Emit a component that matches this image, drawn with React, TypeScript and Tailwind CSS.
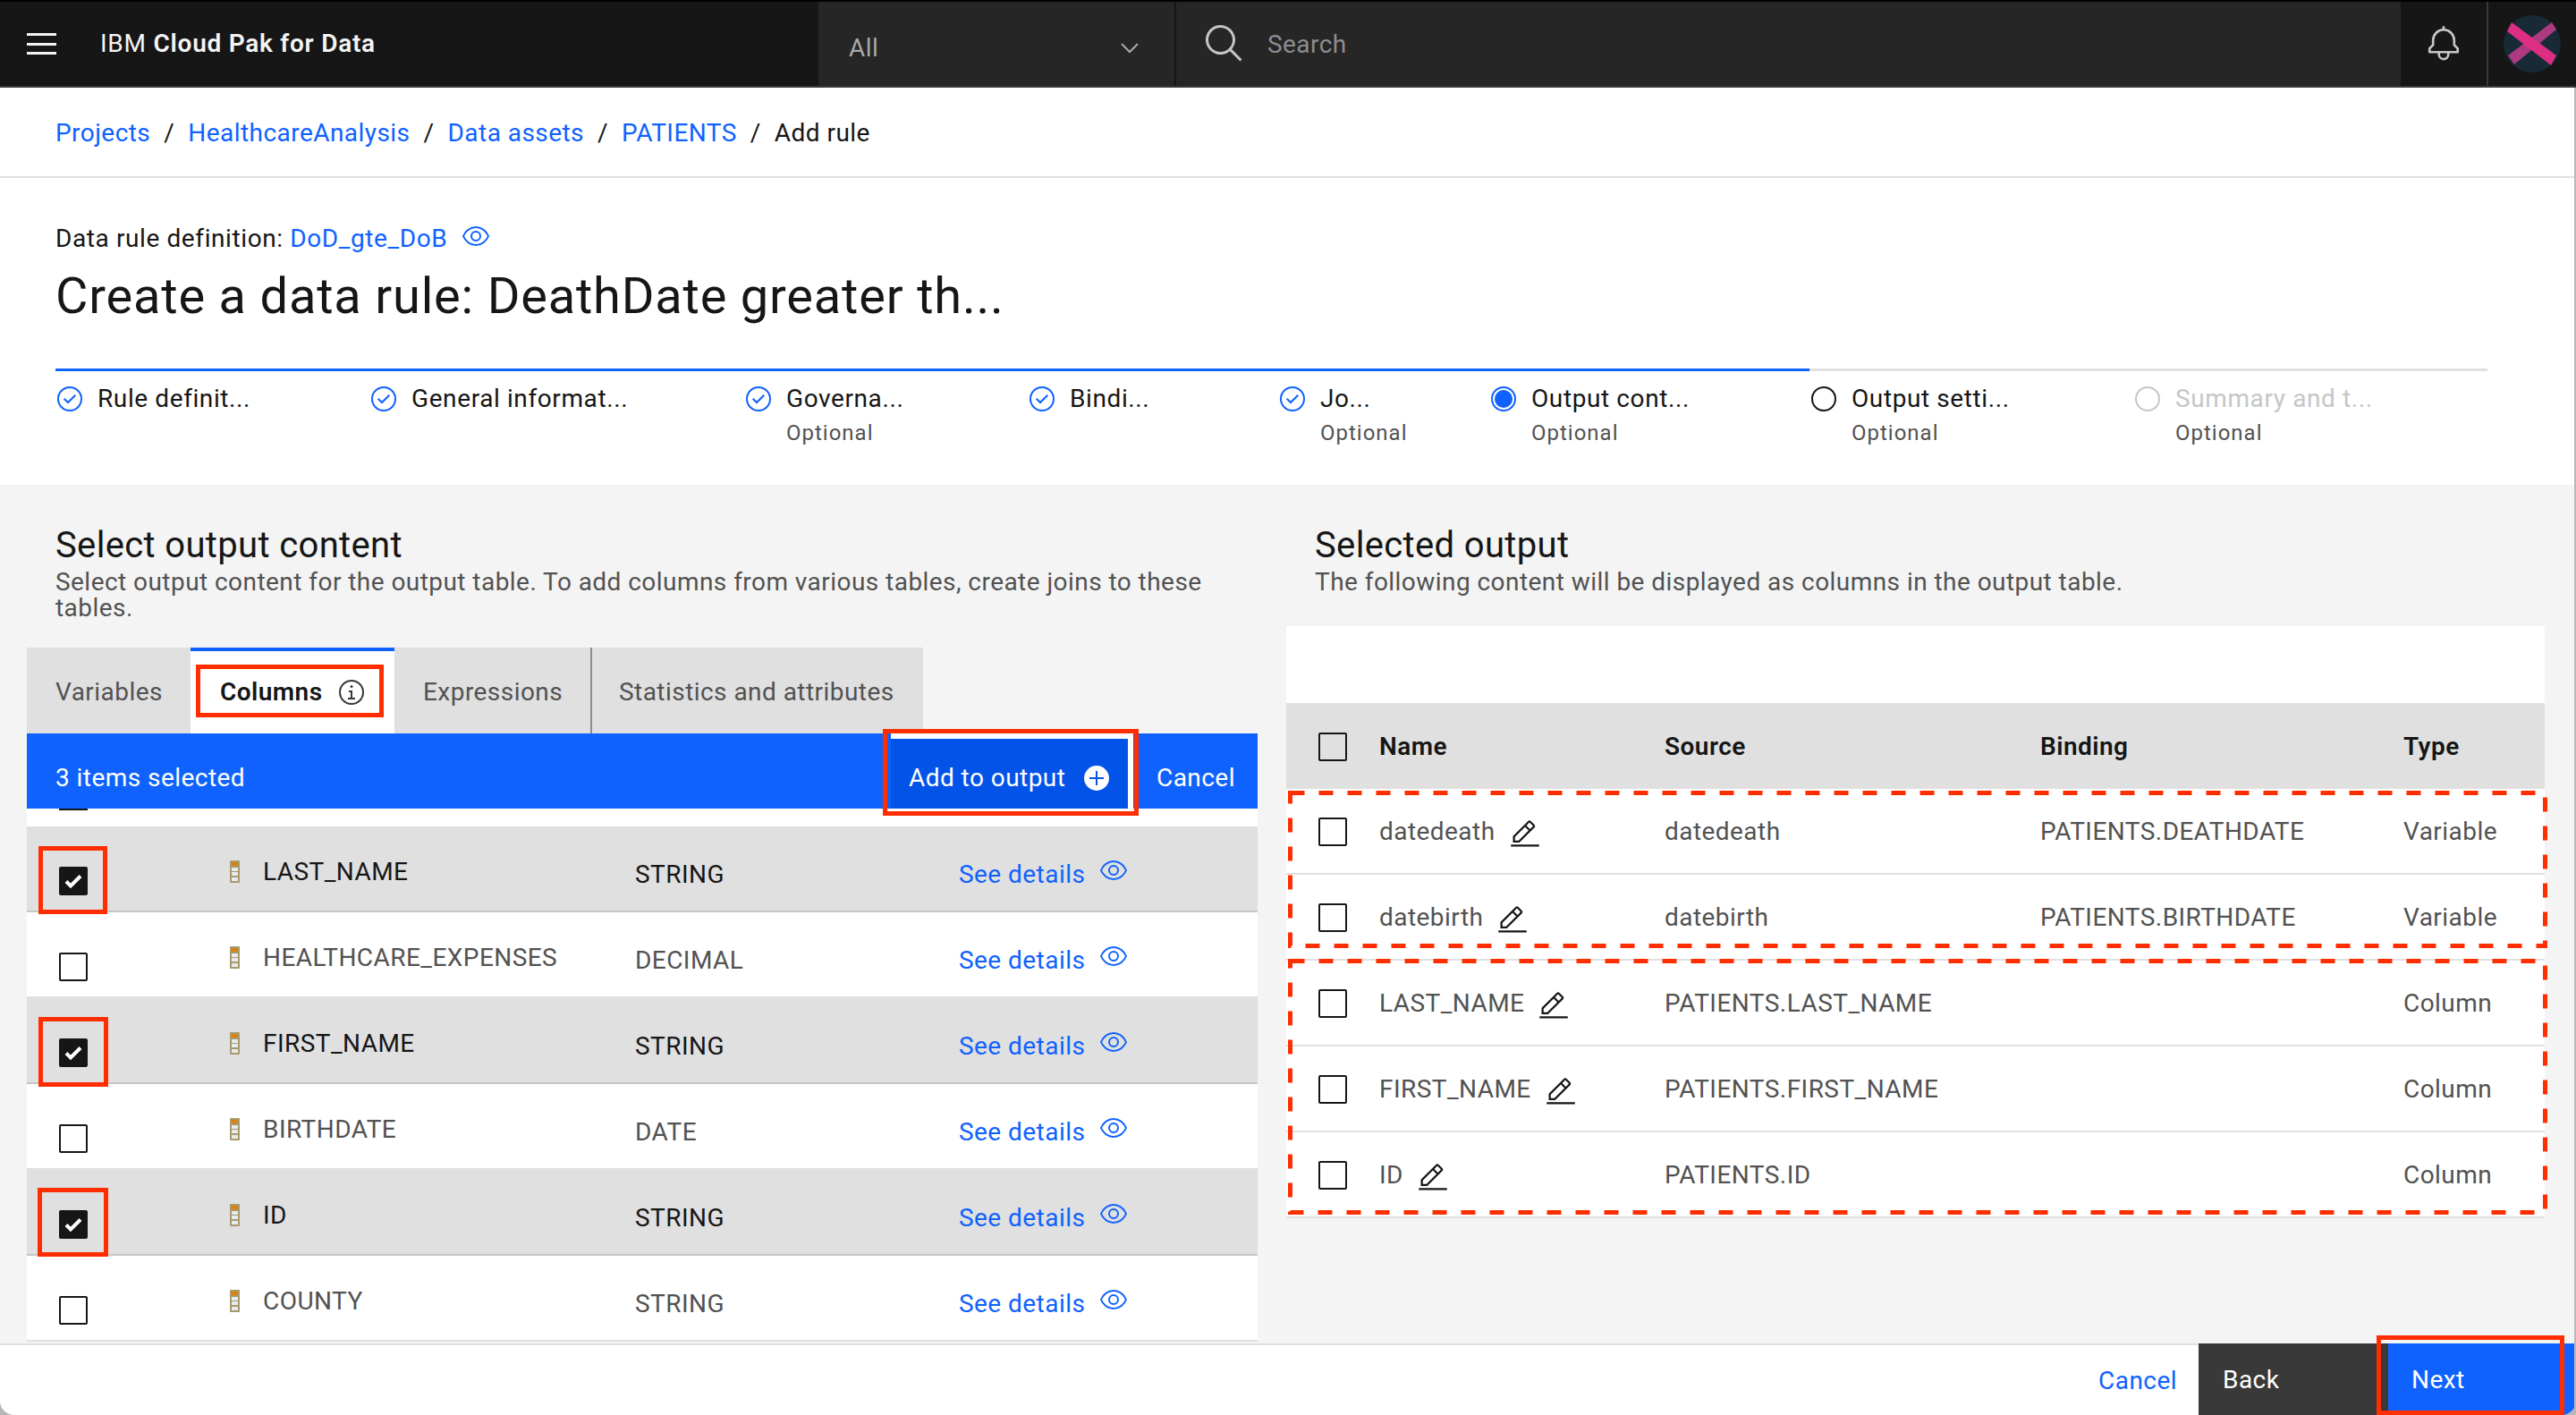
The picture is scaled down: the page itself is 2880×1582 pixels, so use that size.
import type React from "react"

const steps = [
  { label: "Rule definit...", state: "done", width: "w-[351px]" },
  { label: "General informat...", state: "done", width: "w-[419px]" },
  { label: "Governa...", state: "done", optional: true, width: "w-[317px]" },
  { label: "Bindi...", state: "done", width: "w-[280px]" },
  { label: "Jo...", state: "done", optional: true, width: "w-[236px]" },
  { label: "Output cont...", state: "current", optional: true, width: "w-[358px]" },
  { label: "Output setti...", state: "todo", optional: true, width: "w-[362px]" },
  { label: "Summary and t...", state: "disabled", optional: true, width: "w-[396px]" },
]

const leftRows = [
  { name: "LAST_NAME", type: "STRING", selected: true },
  { name: "HEALTHCARE_EXPENSES", type: "DECIMAL", selected: false },
  { name: "FIRST_NAME", type: "STRING", selected: true },
  { name: "BIRTHDATE", type: "DATE", selected: false },
  { name: "ID", type: "STRING", selected: true },
  { name: "COUNTY", type: "STRING", selected: false },
]

const rightRows = [
  { name: "datedeath", source: "datedeath", binding: "PATIENTS.DEATHDATE", type: "Variable" },
  { name: "datebirth", source: "datebirth", binding: "PATIENTS.BIRTHDATE", type: "Variable" },
  { name: "LAST_NAME", source: "PATIENTS.LAST_NAME", binding: "", type: "Column" },
  { name: "FIRST_NAME", source: "PATIENTS.FIRST_NAME", binding: "", type: "Column" },
  { name: "ID", source: "PATIENTS.ID", binding: "", type: "Column" },
]

function EyeIcon({ className }: { className?: string }): React.ReactElement {
  return (
    <svg viewBox="0 0 32 32" fill="currentColor" className={className}>
      <path d="M30.94 15.66A16.69 16.69 0 0 0 16 5 16.69 16.69 0 0 0 1.06 15.66a1 1 0 0 0 0 .68A16.69 16.69 0 0 0 16 27a16.69 16.69 0 0 0 14.94-10.66 1 1 0 0 0 0-.68zM16 25c-5.3 0-10.9-3.93-12.93-9C5.1 10.93 10.7 7 16 7s10.9 3.93 12.93 9C26.9 21.07 21.3 25 16 25z" />
      <path d="M16 10a6 6 0 1 0 6 6 6 6 0 0 0-6-6zm0 10a4 4 0 1 1 4-4 4 4 0 0 1-4 4z" />
    </svg>
  )
}

function PencilIcon(): React.ReactElement {
  return (
    <svg viewBox="0 0 32 32" fill="#161616" className="mt-[6px] h-9 w-9 shrink-0">
      <path d="M2 26h28v2H2zM25.4 9c.8-.8.8-2 0-2.8l-3.6-3.6c-.8-.8-2-.8-2.8 0l-15 15V24h6.4l15-15zm-5-5L24 7.6l-3 3L17.4 7l3-3zM6 22v-3.6l10-10 3.6 3.6-10 10H6z" />
    </svg>
  )
}

function StepIcon({ state }: { state: string }): React.ReactElement {
  if (state === "done") {
    return (
      <svg viewBox="0 0 32 32" fill="#0f62fe" className="h-8 w-8 shrink-0">
        <path d="M14 21.414 9 16.413 10.413 15 14 18.586 21.585 11 23 12.415 14 21.414z" />
        <path d="M16 2a14 14 0 1 0 14 14A14 14 0 0 0 16 2zm0 26a12 12 0 1 1 12-12 12 12 0 0 1-12 12z" />
      </svg>
    )
  }
  if (state === "current") {
    return (
      <svg viewBox="0 0 32 32" fill="#0f62fe" className="h-8 w-8 shrink-0">
        <path d="M16 2a14 14 0 1 0 14 14A14 14 0 0 0 16 2zm0 26a12 12 0 1 1 12-12 12 12 0 0 1-12 12z" />
        <circle cx="16" cy="16" r="10" />
      </svg>
    )
  }
  return (
    <svg viewBox="0 0 32 32" fill={state === "todo" ? "#161616" : "#c6c6c6"} className="h-8 w-8 shrink-0">
      <path d="M16 2a14 14 0 1 0 14 14A14 14 0 0 0 16 2zm0 26a12 12 0 1 1 12-12 12 12 0 0 1-12 12z" />
    </svg>
  )
}

function Checkbox({ checked = false }: { checked?: boolean }): React.ReactElement {
  if (checked) {
    return (
      <span className="flex h-8 w-8 items-center justify-center rounded-[2px] bg-[#161616]">
        <svg viewBox="0 0 32 32" className="h-8 w-8">
          <path d="M8 16.5l5 5 11-11" fill="none" stroke="#fff" strokeWidth="4" />
        </svg>
      </span>
    )
  }
  return <span className="block h-8 w-8 rounded-[2px] border-2 border-[#161616]" />
}

function ColumnIcon(): React.ReactElement {
  return (
    <svg viewBox="0 0 11 25" className="h-[25px] w-[11px]">
      <rect width="11" height="25" rx="1" fill="#a89a6c" />
      <rect x="2" y="2" width="7" height="4" fill="#d9820f" />
      <rect x="2" y="8" width="7" height="4" fill="#e6ebf0" />
      <rect x="2" y="13" width="7" height="4" fill="#e6ebf0" />
      <rect x="2" y="19" width="7" height="4" fill="#e6ebf0" />
    </svg>
  )
}

function Header(): React.ReactElement {
  return (
    <header className="flex h-[98px] shrink-0 border-t-2 border-b-2 border-t-black border-b-[#393939] bg-[#161616] text-[#f4f4f4]">
      <div className="flex w-[915px] items-center">
        <div className="ml-[30px] flex h-6 w-[33px] flex-col justify-between">
          <span className="h-[3px] bg-[#f4f4f4]" />
          <span className="h-[3px] bg-[#f4f4f4]" />
          <span className="h-[3px] bg-[#f4f4f4]" />
        </div>
        <span className="ml-[49px] text-[28px] tracking-[0.75px]">
          IBM <span className="font-semibold">Cloud Pak for Data</span>
        </span>
      </div>
      <div className="flex w-[400px] items-center justify-between border-r-2 border-[#161616] bg-[#262626] pl-[34px] pr-[40px] pt-[10px] text-[28px] text-[#a8a8a8]">
        <span>All</span>
        <svg viewBox="0 0 20 12" className="h-3 w-5" fill="none" stroke="#a8a8a8" strokeWidth="2">
          <path d="M1 1l9 9 9-9" />
        </svg>
      </div>
      <div className="flex w-[1369px] items-center gap-[24px] bg-[#262626] pl-[30px] text-[28px] text-[#8d8d8d]">
        <svg viewBox="0 0 32 32" fill="#c6c6c6" className="h-12 w-12 shrink-0">
          <path d="M29 27.586l-7.552-7.552a11.018 11.018 0 1 0-1.414 1.414L27.586 29zM4 13a9 9 0 1 1 9 9 9.01 9.01 0 0 1-9-9z" />
        </svg>
        <span className="mt-[2px]">Search</span>
      </div>
      <div className="flex w-[98px] items-center justify-center border-r-2 border-[#393939]">
        <svg viewBox="0 0 32 32" fill="#c6c6c6" className="h-[42px] w-[42px]">
          <path d="M28.707 19.293 26 16.586V13a10.014 10.014 0 0 0-9-9.95V1h-2v2.05A10.014 10.014 0 0 0 6 13v3.586l-2.707 2.707A1 1 0 0 0 3 20v3a1 1 0 0 0 1 1h7v.777a5.152 5.152 0 0 0 4.5 5.199A5.006 5.006 0 0 0 21 25v-1h7a1 1 0 0 0 1-1v-3a1 1 0 0 0-.293-.707zM19 25a3 3 0 0 1-6 0v-1h6zm8-3H5v-1.586l2.707-2.707A1 1 0 0 0 8 17v-4a8 8 0 0 1 16 0v4a1 1 0 0 0 .293.707L27 20.414z" />
        </svg>
      </div>
      <div className="flex flex-1 items-center justify-center">
        <svg viewBox="0 0 64 64" className="h-16 w-16">
          <circle cx="32" cy="32" r="32" fill="#172a36" />
          <path d="M54 8 L59 16 L12 55 L5 45 Z" fill="#ad3a80" />
          <path d="M9 8 L59 45 L53 56 L4 18 Z" fill="#dd2e83" />
        </svg>
      </div>
    </header>
  )
}

function Breadcrumb(): React.ReactElement {
  const links = ["Projects", "HealthcareAnalysis", "Data assets", "PATIENTS"]
  return (
    <nav className="flex h-[101px] shrink-0 items-center border-b-2 border-[#e0e0e0] pl-[62px] pt-[2px] text-[28px] text-[#161616]">
      {links.map((link) => (
        <span key={link} className="flex items-center">
          <span className="text-[#0f62fe]">{link}</span>
          <span className="mx-[15px]">/</span>
        </span>
      ))}
      <span>Add rule</span>
    </nav>
  )
}

function Stepper(): React.ReactElement {
  return (
    <div className="ml-[62px] w-[2719px]">
      <div className="flex h-[3px]">
        <span className="w-[1961px] bg-[#0f62fe]" />
        <span className="flex-1 bg-[#e0e0e0]" />
      </div>
      <div className="mt-[15px] flex">
        {steps.map((step) => (
          <div key={step.label} className={`flex gap-[15px] ${step.width}`}>
            <StepIcon state={step.state} />
            <div className="flex flex-col">
              <span
                className={`text-[28px] leading-8 tracking-[0.6px] ${
                  step.state === "disabled" ? "text-[#c6c6c6]" : "text-[#161616]"
                }`}
              >
                {step.label}
              </span>
              {step.optional && <span className="mt-[6px] text-[24px] leading-8 tracking-[1px] text-[#525252]">Optional</span>}
            </div>
          </div>
        ))}
      </div>
    </div>
  )
}

function LeftPanel(): React.ReactElement {
  return (
    <section className="relative flex w-[1406px] shrink-0 flex-col pl-[30px] pt-[42px]">
      <h2 className="pl-[32px] text-[40px] leading-[52px] tracking-[0.35px] text-[#161616]">Select output content</h2>
      <p className="pl-[32px] pr-[40px] text-[28px] leading-[29px] text-[#525252]">
        Select output content for the output table. To add columns from various tables, create joins to these tables.
      </p>
      <div className="mt-[30px] flex h-[96px] w-[1002px] bg-[#e0e0e0] text-[28px] text-[#525252]">
        <div className="flex w-[183px] items-center pl-[32px] pt-[3px]">Variables</div>
        <div className="flex w-[228px] items-center gap-[16px] border-t-4 border-[#0f62fe] bg-white pl-[33px] font-semibold text-[#161616]">
          Columns
          <svg viewBox="0 0 32 32" fill="#393939" className="h-8 w-8">
            <path d="M17 22v-8h-4v2h2v6h-3v2h8v-2h-3z" />
            <path d="M16 8a1.5 1.5 0 1 0 1.5 1.5A1.5 1.5 0 0 0 16 8z" />
            <path d="M16 30a14 14 0 1 1 14-14 14 14 0 0 1-14 14zm0-26a12 12 0 1 0 12 12A12.014 12.014 0 0 0 16 4z" />
          </svg>
        </div>
        <div className="flex w-[219px] items-center pl-[32px] pt-[3px]">Expressions</div>
        <div className="flex flex-1 items-center border-l-2 border-[#8d8d8d] pl-[30px] pt-[3px]">Statistics and attributes</div>
      </div>
      <div className="flex h-[84px] items-stretch bg-[#0f62fe] text-[28px] text-white">
        <span className="flex flex-1 items-center pl-[32px] pt-[16px]">3 items selected</span>
        <div className="flex w-[271px] items-center justify-between border-t-[6px] border-r-[6px] border-white bg-[#0353e9] pl-[20px] pr-[19px] pt-[10px]">
          Add to output
          <svg viewBox="0 0 32 32" fill="#fff" className="h-8 w-8">
            <path d="M16 2A14.173 14.173 0 0 0 2 16a14.173 14.173 0 0 0 14 14 14.173 14.173 0 0 0 14-14A14.173 14.173 0 0 0 16 2zm8 15h-7v7h-2v-7H8v-2h7V8h2v7h7z" />
          </svg>
        </div>
        <span className="flex w-[139px] items-center pl-[26px] pt-[16px]">Cancel</span>
      </div>
      <div className="h-[20px] bg-white pl-[36px]">
        <span className="block h-[2px] w-8 bg-[#161616]" />
      </div>
      {leftRows.map((row) => (
        <div
          key={row.name}
          className={`grid h-[96px] grid-cols-[227px_453px_362px_1fr] border-b-2 text-[28px] ${
            row.selected
              ? "border-[#c6c6c6] bg-[#e0e0e0] text-[#161616]"
              : "border-[#e0e0e0] bg-white text-[#525252]"
          }`}
        >
          <div className="pl-[36px] pt-[45px]">
            <Checkbox checked={row.selected} />
          </div>
          <div className="flex items-start gap-[26px] pt-[34px]">
            <span className="mt-[4px]">
              <ColumnIcon />
            </span>
            <span className="leading-[34px]">{row.name}</span>
          </div>
          <div className="pt-[37px] leading-[34px]">{row.type}</div>
          <div className="flex items-start gap-[16px] pt-[37px] leading-[34px] text-[#0f62fe]">
            See details
            <EyeIcon className="-mt-[4px] h-8 w-8" />
          </div>
        </div>
      ))}
    </section>
  )
}

function RightPanel(): React.ReactElement {
  return (
    <section className="flex w-[1439px] shrink-0 flex-col pl-[32px] pt-[42px]">
      <h2 className="pl-[32px] text-[40px] leading-[52px] tracking-[0.35px] text-[#161616]">Selected output</h2>
      <p className="pl-[32px] text-[28px] leading-[29px] text-[#525252]">
        The following content will be displayed as columns in the output table.
      </p>
      <div className="mt-[35px] h-[86px] bg-white" />
      <div className="grid h-[96px] grid-cols-[104px_319px_420px_406px_1fr] items-center bg-[#e0e0e0] pt-[1px] text-[28px] font-semibold text-[#161616]">
        <div className="pl-[36px]">
          <Checkbox />
        </div>
        <span>Name</span>
        <span>Source</span>
        <span>Binding</span>
        <span>Type</span>
      </div>
      {rightRows.map((row) => (
        <div
          key={row.name}
          className="grid h-[96px] grid-cols-[104px_319px_420px_406px_1fr] items-center border-b-2 border-[#e0e0e0] bg-white pt-[2px] text-[28px] text-[#525252]"
        >
          <div className="pl-[36px]">
            <Checkbox />
          </div>
          <div className="flex items-center gap-[15px]">
            {row.name}
            <PencilIcon />
          </div>
          <span>{row.source}</span>
          <span>{row.binding}</span>
          <span>{row.type}</span>
        </div>
      ))}
    </section>
  )
}

function Footer(): React.ReactElement {
  return (
    <footer className="flex h-[80px] shrink-0 items-stretch text-[28px]">
      <div className="flex flex-1 items-center justify-end rounded-bl-[16px] border-t-2 border-[#e0e0e0] bg-white pr-[24px] pt-[2px] text-[#0f62fe]">
        Cancel
      </div>
      <div className="flex w-[212px] items-center bg-[#393939] pl-[27px] pt-[2px] text-white">Back</div>
      <div className="flex w-[210px] items-center rounded-br-[16px] bg-[#0f62fe] pl-[26px] pt-[2px] text-white">Next</div>
    </footer>
  )
}

export default function App(): React.ReactElement {
  return (
    <div className="relative flex h-[1582px] w-[2880px] flex-col overflow-hidden bg-[#b8b8b8] font-['Roboto',sans-serif] tracking-[0.45px]">
      <Header />
      <div className="shrink-0 bg-white">
        <Breadcrumb />
        <div className="h-[343px]">
          <div className="pl-[62px] pt-[52px]">
            <div className="flex items-center text-[28px] leading-8 tracking-[0.6px] text-[#161616]">
              Data rule definition:&nbsp;<span className="text-[#0f62fe]">DoD_gte_DoB</span>
              <EyeIcon className="ml-[16px] -mt-[6px] h-8 w-8 text-[#0f62fe]" />
            </div>
            <h1 className="mt-[12px] text-[56px] leading-[72px] tracking-[0.8px] text-[#161616]">
              Create a data rule: DeathDate greater th...
            </h1>
          </div>
          <div className="mt-[45px]">
            <Stepper />
          </div>
        </div>
      </div>
      <main className="flex min-h-0 flex-1 bg-[#f4f4f4]">
        <LeftPanel />
        <RightPanel />
      </main>
      <Footer />

      {/* red annotation boxes drawn over the screenshot */}
      <div className="absolute left-[219px] top-[743px] h-[59px] w-[210px] border-[5px] border-[#ff2e00]" />
      <div className="absolute left-[987px] top-[815px] h-[97px] w-[286px] border-[5px] border-[#ff2e00]" />
      <div className="absolute left-[43px] top-[946px] h-[76px] w-[77px] border-[5px] border-[#ff2e00]" />
      <div className="absolute left-[43px] top-[1137px] h-[78px] w-[78px] border-[5px] border-[#ff2e00]" />
      <div className="absolute left-[42px] top-[1328px] h-[77px] w-[79px] border-[5px] border-[#ff2e00]" />
      <div className="absolute left-[2657px] top-[1493px] h-[89px] w-[210px] border-[5px] border-[#ff2e00]" />
      <svg className="absolute left-[1440px] top-[884px] h-[176px] w-[1408px]" fill="none" stroke="#ff2e00" strokeWidth="5" strokeDasharray="16 16">
        <rect x="2.5" y="2.5" width="1403" height="171" />
      </svg>
      <svg className="absolute left-[1440px] top-[1072px] h-[286px] w-[1408px]" fill="none" stroke="#ff2e00" strokeWidth="5" strokeDasharray="16 16">
        <rect x="2.5" y="2.5" width="1403" height="281" />
      </svg>
      <div className="absolute bottom-0 right-0 top-[98px] w-[2px] bg-[#b8b8b8]" />
    </div>
  )
}
